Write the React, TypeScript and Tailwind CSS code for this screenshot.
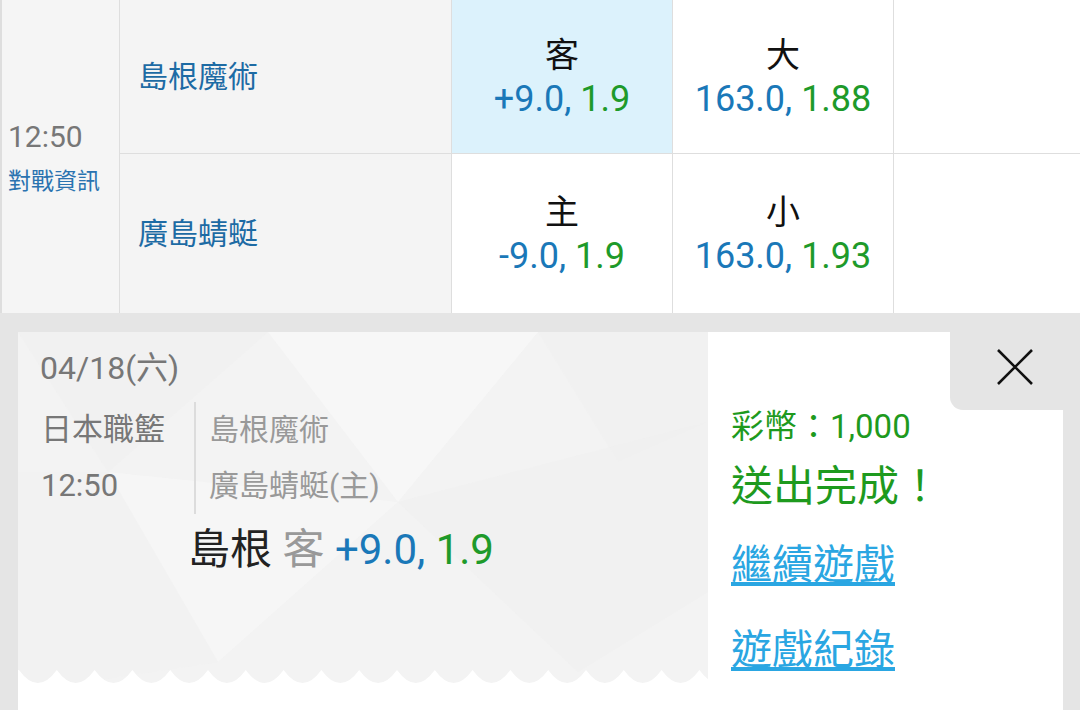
import React from 'react';

const FONT = "font-['Roboto','Noto_Sans_CJK_TC',sans-serif]";

type Odd = { label: string; line: string; price: string; active?: boolean };

const rows: { team: string; odds: Odd[] }[] = [
  {
    team: '島根魔術',
    odds: [
      { label: '客', line: '+9.0,', price: '1.9', active: true },
      { label: '大', line: '163.0,', price: '1.88' },
    ],
  },
  {
    team: '廣島蜻蜓',
    odds: [
      { label: '主', line: '-9.0,', price: '1.9' },
      { label: '小', line: '163.0,', price: '1.93' },
    ],
  },
];

function OddCell({ o }: { o: Odd }) {
  return (
    <div className={`flex flex-col items-center justify-center border-r border-[#dedede] ${o.active ? 'bg-[#dcf2fc]' : 'bg-white'}`}>
      <div className="text-[34px] leading-[44px] text-[#111]">{o.label}</div>
      <div className="text-[36px] leading-[44px]">
        <span className="text-[#1a78b8]">{o.line}</span> <span className="text-[#1e9a2a]">{o.price}</span>
      </div>
    </div>
  );
}

function Zigzag() {
  const period = 37.8;
  let d = 'M0,0';
  for (let i = 0; i < 19; i++) {
    const x0 = 1 + i * period;
    d += ` L${x0},0 Q${x0 + period / 2},26 ${x0 + period},0`;
  }
  d += ' L690,0 L690,40 L0,40 Z';
  return (
    <svg className="absolute left-0 top-[338px]" width="690" height="40" viewBox="0 0 690 40">
      <path d={d} fill="#ffffff" />
    </svg>
  );
}

// faint low-poly pattern behind the ticket
function Facets() {
  return (
    <svg className="absolute inset-0" width="690" height="380" viewBox="0 0 690 380">
      <polygon points="0,0 250,0 90,140" fill="#efefef" opacity="0.5" />
      <polygon points="250,0 520,0 380,170" fill="#f8f8f8" opacity="0.8" />
      <polygon points="520,0 690,0 690,90 600,130" fill="#f0f0f0" opacity="0.5" />
      <polygon points="90,140 380,170 200,330" fill="#f6f6f6" opacity="0.8" />
      <polygon points="380,170 690,90 690,260 560,340" fill="#f0f0f0" opacity="0.5" />
      <polygon points="0,140 90,140 200,330 0,360" fill="#f1f1f1" opacity="0.5" />
    </svg>
  );
}

export default function App() {
  return (
    <div className={`w-[1080px] h-[710px] overflow-hidden bg-[#e5e5e5] ${FONT}`}>
      {/* match table */}
      <div className="flex h-[313px] bg-white">
        <div className="w-[120px] shrink-0 bg-[#f5f5f5] border-l-2 border-r border-[#dedede] flex flex-col justify-center pl-[6px]">
          <div className="text-[30px] leading-[40px] text-[#777]">12:50</div>
          <div className="mt-[10px] text-[23px] leading-[30px] text-[#2a73b0]">對戰資訊</div>
        </div>
        <div className="flex-1 flex flex-col">
          {rows.map((r, i) => (
            <div key={r.team} className={`grid grid-cols-[332px_221px_221px_1fr] ${i === 0 ? 'h-[154px] border-b border-[#dedede]' : 'flex-1'}`}>
              <div className="bg-[#f4f4f4] border-r border-[#dedede] flex items-center pl-[18px] text-[30px] text-[#1d6ba4]">
                {r.team}
              </div>
              {r.odds.map(o => <OddCell key={o.label} o={o} />)}
              <div className="bg-white" />
            </div>
          ))}
        </div>
      </div>

      {/* bet receipt */}
      <div className="mt-[19px] ml-[18px] w-[1045px] h-[378px] flex bg-white">
        <div className="relative w-[690px] h-full bg-[#f3f3f3] overflow-hidden">
          <Facets />
          <Zigzag />
          <div className="relative pt-[16px] pl-[22px]">
            <div className="text-[32px] leading-[40px] text-[#777]">04/18(六)</div>
            <div className="flex mt-[14px]">
              <div className="w-[154px] pl-[1px] text-[31px] leading-[56px] text-[#777]">
                <div>日本職籃</div>
                <div>12:50</div>
              </div>
              <div className="border-l-2 border-[#dcdcdc] pl-[13px] text-[30px] leading-[56px] text-[#999]">
                <div>島根魔術</div>
                <div>廣島蜻蜓(主)</div>
              </div>
            </div>
            <div className="mt-[8px] pl-[148px] text-[42px] leading-[56px]">
              <span className="text-[#222]">島根</span> <span className="text-[#999]">客</span>{' '}
              <span className="text-[#1a78b8]">+9.0,</span> <span className="text-[#1e9a2a]">1.9</span>
            </div>
          </div>
        </div>

        <div className="relative flex-1 pl-[23px] pt-[73px]">
          <div className="absolute top-0 right-0 w-[113px] h-[78px] bg-[#e5e5e5] rounded-bl-[13px]">
            <svg className="absolute left-[47px] top-[17px]" width="36" height="36" viewBox="0 0 36 36">
              <path d="M1 1 L35 35 M35 1 L1 35" stroke="#111" strokeWidth="2.6" fill="none" />
            </svg>
          </div>
          <div className="text-[33px] leading-[44px] text-[#1e9a1e]">彩幣：1,000</div>
          <div className="mt-[10px] text-[42px] leading-[56px] text-[#1e9a1e]">送出完成！</div>
          <div className="mt-[22px] text-[41px] leading-[56px] text-[#2aa6e2] underline decoration-[4px] underline-offset-[3px]">繼續遊戲</div>
          <div className="mt-[29px] text-[41px] leading-[56px] text-[#2aa6e2] underline decoration-[4px] underline-offset-[3px]">遊戲紀錄</div>
        </div>
      </div>
    </div>
  );
}
